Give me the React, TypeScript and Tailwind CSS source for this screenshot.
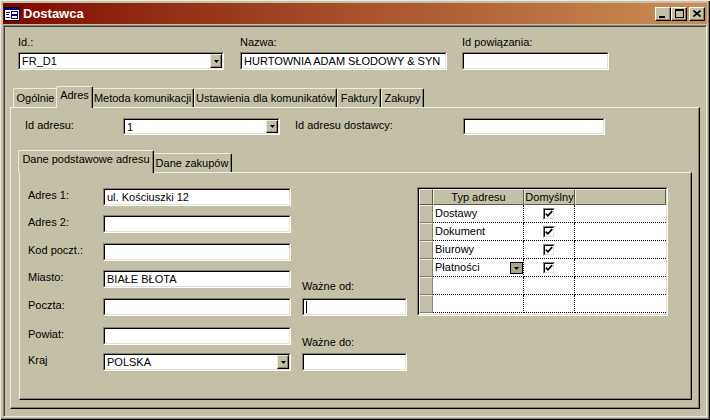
import React from "react";

const FACE = "bg-[#c4c0a8]";

function DropBtn({ className = "" }: { className?: string }) {
  return (
    <div
      className={`w-[12px] h-full ${FACE} border-t border-l border-t-[#eeecdf] border-l-[#eeecdf] border-b border-r border-b-black border-r-black shadow-[inset_-1px_-1px_0_#868271] flex items-center justify-center shrink-0 ${className}`}
    >
      <svg width="5" height="3" viewBox="0 0 5 3">
        <path d="M0 0H5L2.5 3Z" fill="#000" />
      </svg>
    </div>
  );
}

function Field({
  className = "",
  text = "",
  combo = false,
  caret = false,
}: {
  className?: string;
  text?: string;
  combo?: boolean;
  caret?: boolean;
}) {
  return (
    <div
      className={`flex border border-t-[#868271] border-l-[#868271] border-b-white border-r-white bg-white shrink-0 ${className}`}
    >
      <div className="flex-1 flex min-w-0 border border-t-black border-l-black border-b-[#e4e1d2] border-r-[#e4e1d2]">
        <div className="flex-1 pl-[2px] pt-[1px] whitespace-nowrap overflow-hidden">
          {caret ? <span className="inline-block w-[1px] h-[12px] bg-black align-top" /> : text}
        </div>
        {combo && <DropBtn />}
      </div>
    </div>
  );
}

function Tab({
  label,
  className,
  selected = false,
}: {
  label: string;
  className: string;
  selected?: boolean;
}) {
  return (
    <div
      className={
        selected
          ? `relative z-10 -mx-[2px] -mb-[1px] ${FACE} border-t border-l border-t-[#eeecdf] border-l-[#eeecdf] border-r border-r-black shadow-[inset_-1px_0_0_#868271] rounded-tl-[2px] rounded-tr-[2px] flex justify-center pt-[2px] whitespace-nowrap ${className}`
          : `${FACE} border-t border-l border-t-[#eeecdf] border-l-[#eeecdf] border-r border-r-black shadow-[inset_-1px_0_0_#868271] rounded-tl-[2px] rounded-tr-[2px] flex justify-center pt-[3px] whitespace-nowrap ${className}`
      }
    >
      {label}
    </div>
  );
}

function Check() {
  return (
    <div className="w-[12px] h-[12px] border border-t-[#868271] border-l-[#868271] border-b-white border-r-white">
      <div className="w-full h-full border border-t-black border-l-black border-b-[#e4e1d2] border-r-[#e4e1d2] bg-white flex items-center justify-center">
        <svg width="8" height="8" viewBox="0 0 8 8">
          <path d="M0.8 3.6 L2.9 5.8 L7.2 1.2" fill="none" stroke="#000" strokeWidth="1.7" />
        </svg>
      </div>
    </div>
  );
}

function HeadCell({ className, label = "" }: { className: string; label?: string }) {
  return (
    <div
      className={`h-full ${FACE} border-t border-l border-t-[#eeecdf] border-l-[#eeecdf] border-r border-b border-r-[#5e5b4c] border-b-[#5e5b4c] flex items-center justify-center whitespace-nowrap ${className}`}
    >
      {label}
    </div>
  );
}

function Row({
  label = "",
  checked = false,
  drop = false,
}: {
  label?: string;
  checked?: boolean;
  drop?: boolean;
}) {
  return (
    <div className="flex h-[18px]">
      <div className={`w-[14px] h-full ${FACE} border-t border-l border-t-[#eeecdf] border-l-[#eeecdf] border-r border-b border-r-[#868271] border-b-[#868271]`} />
      <div className="w-[91px] h-full border-r border-b border-dotted border-black flex items-center pl-[2px] relative">
        <span>{label}</span>
        {drop && (
          <div className="absolute right-0 top-[3px] w-[13px] h-[12px] bg-[#aaa68c] border border-black flex items-center justify-center">
            <svg width="5" height="3" viewBox="0 0 5 3">
              <path d="M0 0H5L2.5 3Z" fill="#000" />
            </svg>
          </div>
        )}
      </div>
      <div className="w-[51px] h-full border-r border-b border-dotted border-black flex items-center justify-center">
        {checked && <Check />}
      </div>
      <div className="flex-1 h-full border-b border-dotted border-black" />
    </div>
  );
}

function WinBtn({ children, className = "" }: { children: React.ReactNode; className?: string }) {
  return (
    <div
      className={`w-[16px] h-[14px] ${FACE} border-t border-l border-t-white border-l-white border-b border-r border-b-black border-r-black shadow-[inset_-1px_-1px_0_#868271] flex items-center justify-center ${className}`}
    >
      {children}
    </div>
  );
}

function FormRow({
  label,
  mt,
  text = "",
  combo = false,
}: {
  label: string;
  mt: string;
  text?: string;
  combo?: boolean;
}) {
  return (
    <div className={`flex items-start ${mt}`}>
      <div className="w-[75px] pt-[1px]">{label}</div>
      <Field className="w-[188px] h-[18px]" text={text} combo={combo} />
    </div>
  );
}

export default function App() {
  return (
    <div className="w-[710px] h-[420px] bg-[#c4c0a8] p-[3px] flex flex-col text-[11px] leading-[13px] text-black font-['Liberation_Sans',Arial,sans-serif] shadow-[inset_1px_1px_0_#eeecdf,inset_-1px_-1px_0_#000,inset_-2px_-2px_0_#868271] overflow-hidden">
      {/* Title bar */}
      <div className="h-[21px] shrink-0 bg-gradient-to-r from-[#800000] to-[#cc8d52] flex items-center pl-[1px] pr-[2px]">
        <svg width="16" height="16" viewBox="0 0 16 16" className="shrink-0">
          <rect x="0.5" y="1.5" width="15" height="13" fill="#fff" stroke="#000" />
          <rect x="1" y="2" width="14" height="2" fill="#000080" />
          <rect x="2" y="6" width="4" height="1" fill="#000080" />
          <rect x="2" y="8" width="3" height="1" fill="#000080" />
          <rect x="2" y="11" width="4" height="1" fill="#000080" />
          <rect x="7.5" y="5.5" width="6" height="3" fill="#fff" stroke="#000080" />
          <rect x="7.5" y="9.5" width="6" height="3" fill="#fff" stroke="#000080" />
        </svg>
        <div className="ml-[3px] text-white font-bold text-[13px] leading-[16px]">Dostawca</div>
        <div className="flex-1" />
        <WinBtn>
          <div className="w-[6px] h-[2px] bg-black mt-[6px] -ml-[2px]" />
        </WinBtn>
        <WinBtn>
          <div className="w-[9px] h-[9px] border border-black border-t-2" />
        </WinBtn>
        <WinBtn className="ml-[2px]">
          <svg width="8" height="7" viewBox="0 0 8 7">
            <path d="M0.5 0.5 L7.5 6.5 M7.5 0.5 L0.5 6.5" stroke="#000" strokeWidth="1.6" />
          </svg>
        </WinBtn>
      </div>

      {/* Client area */}
      <div className="mt-[1px] flex-1 flex flex-col border border-t-[#868271] border-l-[#868271] border-b-[#eeecdf] border-r-[#eeecdf] shadow-[inset_1px_1px_0_#404040]">
        {/* top fields */}
        <div className="flex pl-[14px] mt-[10px]">
          <div className="w-[206px]">
            <div className="h-[13px]">Id.:</div>
            <Field className="mt-[3px] w-[206px] h-[18px]" text="FR_D1" combo />
          </div>
          <div className="w-[207px] ml-[16px]">
            <div className="h-[13px]">Nazwa:</div>
            <Field className="mt-[3px] w-[207px] h-[18px]" text="HURTOWNIA ADAM SŁODOWY & SYN" />
          </div>
          <div className="w-[147px] ml-[15px]">
            <div className="h-[13px]">Id powiązania:</div>
            <Field className="mt-[3px] w-[147px] h-[18px]" />
          </div>
        </div>

        {/* Outer tab control */}
        <div className="ml-[6px] w-[690px] mt-[16px]">
          <div className="flex items-end h-[21px] pl-[3px]">
            <Tab label="Ogólnie" className="w-[45px] h-[19px]" />
            <Tab label="Adres" className="w-[37px] h-[22px]" selected />
            <Tab label="Metoda komunikacji" className="w-[103px] h-[19px]" />
            <Tab label="Ustawienia dla komunikatów" className="w-[143px] h-[19px]" />
            <Tab label="Faktury" className="w-[44px] h-[19px]" />
            <Tab label="Zakupy" className="w-[43px] h-[19px]" />
          </div>
          <div className="h-[302px] border border-t-[#eeecdf] border-l-[#eeecdf] border-b-black border-r-black shadow-[inset_-1px_-1px_0_#868271] flex flex-col">
            <div className="flex items-start ml-[14px] mt-[10px]">
              <div className="w-[98px] pt-[1px]">Id adresu:</div>
              <Field className="w-[157px] h-[17px]" text="1" combo />
              <div className="w-[168px] ml-[15px] pt-[1px]">Id adresu dostawcy:</div>
              <Field className="w-[142px] h-[17px]" />
            </div>

            {/* Inner tab control */}
            <div className="ml-[8px] w-[673px] mt-[15px]">
              <div className="flex items-end h-[22px] pl-[1px]">
                <Tab label="Dane podstawowe adresu" className="w-[136px] h-[23px]" selected />
                <Tab label="Dane zakupów" className="w-[80px] h-[19px]" />
              </div>
              <div className="h-[228px] border border-t-[#eeecdf] border-l-[#eeecdf] border-b-black border-r-black shadow-[inset_-1px_-1px_0_#868271] flex items-start">
                <div className="ml-[8px] flex flex-col">
                  <FormRow label="Adres 1:" mt="mt-[15px]" text="ul. Kościuszki 12" />
                  <FormRow label="Adres 2:" mt="mt-[9px]" />
                  <FormRow label="Kod poczt.:" mt="mt-[10px]" />
                  <FormRow label="Miasto:" mt="mt-[9px]" text="BIAŁE BŁOTA" />
                  <FormRow label="Poczta:" mt="mt-[10px]" />
                  <FormRow label="Powiat:" mt="mt-[11px]" />
                  <FormRow label="Kraj" mt="mt-[8px]" text="POLSKA" combo />
                </div>
                <div className="ml-[11px] mt-[107px] w-[105px] flex flex-col">
                  <div className="h-[13px]">Ważne od:</div>
                  <Field className="mt-[5px] w-[105px] h-[18px]" caret />
                  <div className="h-[13px] mt-[20px]">Ważne do:</div>
                  <Field className="mt-[4px] w-[105px] h-[18px]" />
                </div>
                <div className="ml-[10px] mt-[14px] w-[251px] h-[129px] border border-t-[#868271] border-l-[#868271] border-b-white border-r-white">
                  <div className="h-full border border-t-black border-l-black border-b-[#e4e1d2] border-r-[#e4e1d2] bg-white flex flex-col">
                    <div className="flex h-[16px]">
                      <HeadCell className="w-[14px]" />
                      <HeadCell className="w-[91px]" label="Typ adresu" />
                      <HeadCell className="w-[51px]" label="Domyślny" />
                      <HeadCell className="flex-1" />
                    </div>
                    <Row label="Dostawy" checked />
                    <Row label="Dokument" checked />
                    <Row label="Biurowy" checked />
                    <Row label="Płatności" checked drop />
                    <Row />
                    <Row />
                  </div>
                </div>
              </div>
            </div>
          </div>
        </div>
      </div>
    </div>
  );
}
